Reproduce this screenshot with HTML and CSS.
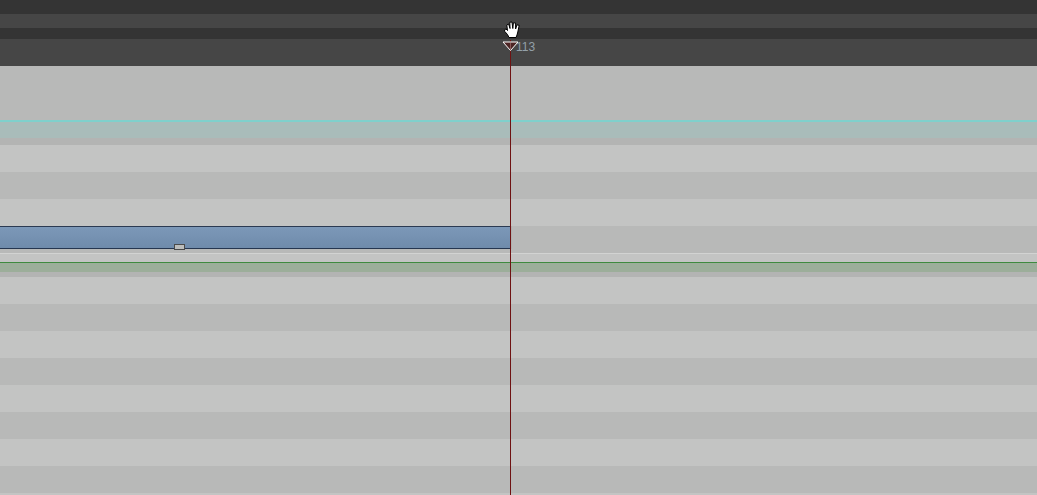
FILE: index.html
```html
<!DOCTYPE html>
<html lang="en">
<head>
    <meta charset="UTF-8">
    <title>Timeline</title>
    <link rel="stylesheet" href="styles.css">
</head>
<body>
    <div class="timeline">
        <div class="ruler">
            <div class="ruler-band dark band-14"></div>
            <div class="ruler-band mid band-14"></div>
            <div class="ruler-band dark band-11"></div>
            <div class="ruler-band mid band-27"></div>
        </div>
        <div class="tracks">
            <div class="track-top"></div>
            <div class="marker-cyan"></div>
            <div class="track-gap"></div>
            <div class="track light"></div>
            <div class="track dark"></div>
            <div class="track light"></div>
            <div class="track dark clip-row">
                <div class="clip"><span class="clip-handle"></span></div>
            </div>
            <div class="track-sep"></div>
            <div class="marker-green"></div>
            <div class="track-gap-small"></div>
            <div class="track light"></div>
            <div class="track dark"></div>
            <div class="track light"></div>
            <div class="track dark"></div>
            <div class="track light"></div>
            <div class="track dark"></div>
            <div class="track light"></div>
            <div class="track dark"></div>
            <div class="track light"></div>
        </div>

        <div class="playhead-line"></div>
        <svg class="playhead-head" width="17" height="11" viewBox="0 0 17 11">
            <path d="M1 1 L16 1 L8.500 9.500 Z" fill="#4c2424" stroke="#fff" stroke-width="1"/>
            <path d="M8.500 2 L8.500 8" stroke="#8a5a5a" stroke-width="1"/>
        </svg>
        <span class="frame-label">113</span>
        <svg class="hand-cursor" width="16" height="17" viewBox="0 0 16 17">
            <path d="M5 16.500 L3.500 13.500 L0.800 10.500 L0.500 8.800 L2 8 L3.500 9.500 L2.800 4 L4.600 3 L6 7.500 L5.800 1.200 L8 1 L8.800 7.500 L9.400 1.800 L11.600 2 L11.600 8 L13 3.800 L15.200 4.400 L13.800 11 L13 14 L12 16.500 Z" fill="#fff" stroke="#000" stroke-width="1" stroke-linejoin="round"/>
        </svg>
    </div>
</body>
</html>
```

FILE: styles.css
```css
html, body {
    margin: 0;
    padding: 0;
    overflow: hidden;
}

.timeline {
    position: relative;
    width: 1037px;
    height: 495px;
    overflow: hidden;
    font-family: "Liberation Sans", Arial, sans-serif;
    background-color: #b8b9b8;
}

.ruler-band.dark {
    background-color: #343434;
}

.ruler-band.mid {
    background-color: #464646;
}

.band-14 {
    height: 14px;
}

.band-11 {
    height: 11px;
}

.band-27 {
    height: 27px;
}

.track-top {
    height: 54px;
    background-color: #b8b9b8;
}

.marker-cyan {
    height: 16px;
    border-top: 2px solid #7fd0cc;
    background-color: #a9bcba;
}

.track-gap {
    height: 7px;
    background-color: #b3b4b3;
}

.track {
    height: 27px;
}

.track.light {
    background-color: #c3c4c3;
}

.track.dark {
    background-color: #b8b9b8;
}

.clip-row {
    display: flex;
    align-items: flex-start;
}

.clip {
    position: relative;
    box-sizing: border-box;
    width: 510px;
    height: 23px;
    border-top: 1px solid #2b3a52;
    border-bottom: 1px solid #263650;
    background: linear-gradient(#7c98b8, #6f8bab);
    box-shadow: 2px 0 0 #b0b1b0;
}

.clip-handle {
    position: absolute;
    left: 174px;
    top: 17px;
    box-sizing: border-box;
    width: 11px;
    height: 6px;
    border: 1px solid #4a4a4a;
    background-color: #bcbdbc;
}

.track-sep {
    height: 9px;
    border-top: 1px solid #d2d3d2;
    box-sizing: border-box;
    background-color: #c3c4c3;
}

.marker-green {
    height: 9px;
    border-top: 1px solid #3f8a3f;
    background-color: #9cae9a;
}

.track-gap-small {
    height: 5px;
    background-color: #b3b4b3;
}

.playhead-line {
    position: absolute;
    left: 510px;
    top: 40px;
    width: 1px;
    height: 455px;
    background-color: #6e1212;
}

.playhead-head {
    position: absolute;
    left: 502px;
    top: 41px;
}

.frame-label {
    position: absolute;
    left: 516px;
    top: 40px;
    font-size: 12px;
    line-height: 14px;
    color: #93a0a8;
}

.hand-cursor {
    position: absolute;
    left: 504px;
    top: 21px;
}
```
